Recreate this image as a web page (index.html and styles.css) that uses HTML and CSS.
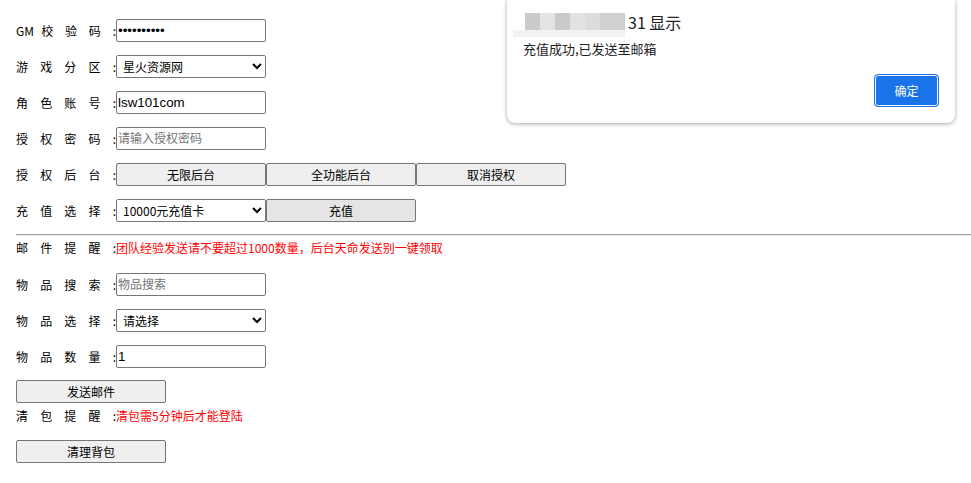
FILE: index.html
```html
<html>
<head>
    <title>GM</title>
    <link rel="stylesheet" href="styles.css">
</head>
<body>
<div class="page">
    <div class="row">
        <span class="label">GM 校 验 码 :</span>
        <input class="field" type="password" value="1234567890"/>
    </div>
    <div class="row">
        <span class="label">游 戏 分 区 :</span>
        <select class="field"><option>星火资源网</option></select>
    </div>
    <div class="row">
        <span class="label">角 色 账 号 :</span>
        <input class="field" value="lsw101com"/>
    </div>
    <div class="row">
        <span class="label">授 权 密 码 :</span>
        <input class="field" placeholder="请输入授权密码"/>
    </div>
    <div class="row">
        <span class="label">授 权 后 台 :</span>
        <button class="btn">无限后台</button><button class="btn">全功能后台</button><button class="btn">取消授权</button>
    </div>
    <div class="row">
        <span class="label">充 值 选 择 :</span>
        <select class="field"><option>10000元充值卡</option></select><button class="btn hover">充值</button>
    </div>
    <div class="line"></div>
    <div class="row text-row">
        <span class="label">邮 件 提 醒 :</span>
        <span class="tip">团队经验发送请不要超过1000数量，后台天命发送别一键领取</span>
    </div>
    <div class="row">
        <span class="label">物 品 搜 索 :</span>
        <input class="field" placeholder="物品搜索"/>
    </div>
    <div class="row">
        <span class="label">物 品 选 择 :</span>
        <select class="field"><option>请选择</option></select>
    </div>
    <div class="row">
        <span class="label">物 品 数 量 :</span>
        <input class="field" value="1"/>
    </div>
    <div class="row send-row">
        <button class="btn">发送邮件</button>
    </div>
    <div class="row text-row clear-tip">
        <span class="label">清 包 提 醒 :</span>
        <span class="tip">清包需5分钟后才能登陆</span>
    </div>
    <div class="row">
        <button class="btn">清理背包</button>
    </div>
</div>

<div class="dialog">
    <div class="dialog-title">
        <span class="mosaic">
            <span class="cell c1"></span><span class="cell c2"></span><span class="cell c3"></span><span class="cell c4"></span><span class="cell c5"></span><span class="cell c6"></span>
            <span class="strip"></span>
        </span>
        <span class="host">31 显示</span>
    </div>
    <div class="dialog-msg">充值成功,已发送至邮箱</div>
    <div class="dialog-foot">
        <button class="ok">确定</button>
    </div>
</div>
</body>
</html>
```

FILE: styles.css
```css
body{
    margin: 0;
    font-family: "Noto Sans CJK SC", "Liberation Sans", sans-serif;
    font-size: 12px;
    color: #000;
    background: #fff;
}
.page{
    padding: 19px 0 0 16px;
}
.row{
    display: flex;
    align-items: center;
    height: 23px;
    margin-bottom: 13px;
}
.label{
    display: inline-block;
    width: 100px;
    text-align: justify;
    text-align-last: justify;
    line-height: 16px;
}
.field{
    box-sizing: border-box;
    width: 150px;
    height: 23px;
    margin: 0;
    padding: 1px 1px;
    border: 1px solid #767676;
    border-radius: 2px;
    font-family: "Liberation Sans", "Noto Sans CJK SC", sans-serif;
    font-size: 13.33px;
    background: #fff;
}
.field::placeholder{
    color: #757575;
    font-family: "Noto Sans CJK SC", sans-serif;
    font-size: 12px;
}
select.field{
    padding: 0 2px;
    font-family: "Noto Sans CJK SC", "Liberation Sans", sans-serif;
    font-size: 12px;
    color: #000;
}
.btn{
    box-sizing: border-box;
    width: 150px;
    height: 23px;
    margin: 0;
    padding: 0;
    border: 1px solid #767676;
    border-radius: 2px;
    background: #efefef;
    font-family: "Noto Sans CJK SC", sans-serif;
    font-size: 12px;
    color: #000;
}
.btn.hover{
    background: #e5e5e5;
}
.line{
    margin: -1px 0 0 0;
    height: 0;
    border-top: 1px solid #a0a0a0;
    border-bottom: 1px solid #eeeeee;
}
.text-row{
    margin-top: 2px;
    height: 20px;
    margin-bottom: 15px;
}
.tip{
    color: #ff0000;
    line-height: 16px;
}
.send-row{
    margin-top: -1px;
    margin-bottom: 5px;
}
.clear-tip{
    margin-top: -2px;
    margin-bottom: 14px;
}

/* alert dialog */
.dialog{
    position: absolute;
    top: 0;
    left: 507px;
    width: 448px;
    height: 123px;
    box-sizing: border-box;
    background: #fff;
    border-radius: 0 0 8px 8px;
    box-shadow: 0 1px 4px rgba(0,0,0,0.35);
    padding: 12px 16px 0 16px;
}
.dialog-title{
    display: flex;
    align-items: flex-start;
    height: 20px;
    line-height: 20px;
    font-size: 16px;
    color: #202124;
}
.mosaic{
    position: relative;
    display: block;
    flex: none;
    width: 118px;
    height: 20px;
    margin-left: -13px;
    font-size: 0;
    line-height: 0;
}
.cell{
    display: inline-block;
    width: 15px;
    height: 17px;
    vertical-align: top;
    margin-top: 1px;
}
.mosaic .c1{ margin-left: 15px; background: #cbcbcb; }
.c2{ background: #e5e4e4; }
.c3{ background: #c9cacb; }
.c4{ background: #e3e2e1; }
.c5{ background: #dcdcdc; }
.c6{ width: 25px; background: #ced0d1; }
.strip{
    position: absolute;
    left: 3px;
    top: 18px;
    width: 112px;
    height: 7px;
    background: #f2f2f2;
}
.host{
    margin-left: 0;
}
.dialog-msg{
    margin-top: 8px;
    font-size: 13px;
    line-height: 18px;
    color: #202124;
}
.dialog-foot{
    display: flex;
    justify-content: flex-end;
    margin-top: 16px;
}
.ok{
    width: 65px;
    height: 33px;
    box-sizing: border-box;
    border: 1px solid #1a73e8;
    border-radius: 4px;
    background: #1a73e8;
    color: #fff;
    box-shadow: inset 0 0 0 1px #fff;
    font-family: "Noto Sans CJK SC", sans-serif;
    font-size: 12px;
    padding: 0;
}
```
